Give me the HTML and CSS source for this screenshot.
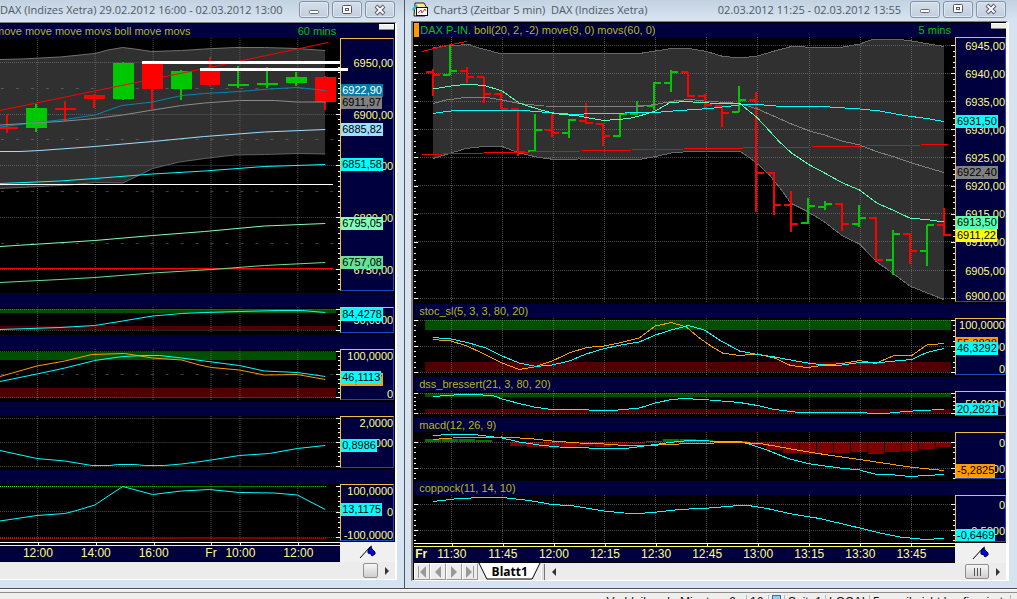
FILE: index.html
```html
<!DOCTYPE html>
<html lang="de">
<head>
<meta charset="utf-8">
<title>DAX Charts</title>
<link rel="stylesheet" href="styles.css">
</head>
<body>
<main class="desk">
  <section class="win win-left">
    <header class="titlebar">
      <h1 class="title">DAX (Indizes Xetra) 29.02.2012 16:00 - 02.03.2012 13:00</h1>
      <div class="controls">
        <button class="ctl" aria-label="Minimieren"><svg width="12" height="12"><rect x="1.5" y="6.5" width="9" height="3" rx="1" fill="#fff" stroke="#667"/></svg></button>
        <button class="ctl" aria-label="Maximieren"><svg width="12" height="12"><rect x="1.5" y="1.5" width="9" height="8" rx="1" fill="#fff" stroke="#556"/><rect x="4.5" y="4.5" width="3" height="2" fill="#fff" stroke="#556"/></svg></button>
        <button class="ctl" aria-label="Schließen"><svg width="12" height="12"><path d="M2 2l8 8M10 2l-8 8" stroke="#556" stroke-width="4"/><path d="M2.500 2.500l7 7M9.500 2.500l-7 7" stroke="#fff" stroke-width="2"/></svg></button>
      </div>
    </header>
    <div class="frame">
      <div class="strip head">
        <span class="ind clipped">move move move movs boll move movs</span>
        <span class="mins">60 mins</span>
        <button class="mini" aria-label="Menü"></button>
      </div>
      <div class="panels" id="left"></div>
      <div class="timerow">
        <div class="times" id="left-times"></div>
        <div class="pin"><svg width="18" height="16"><path d="M1 14L11 3L13 2" fill="none" stroke="#000"/><path d="M9 6l3-3 1 2 3 3 0 2-3 2-1-2-3-1z" fill="#00f" stroke="#002"/></svg></div>
      </div>
      <div class="scroll">
        <span class="track"></span>
        <button class="thumb" aria-label="Bildlauf"></button>
        <button class="arrow" aria-label="Rechts"><svg width="6" height="10"><path d="M1 1v8l4-4z" fill="#333"/></svg></button>
      </div>
    </div>
  </section>
  <section class="win win-right">
    <header class="titlebar">
      <svg class="logo" width="17" height="15"><path d="M3 1h9l3 5-2 8H2z" fill="#ffe98a" stroke="#222"/><path d="M0 7l4-5 2 3-5 4z" fill="#2fb4d8"/><rect x="4.500" y="5.500" width="11" height="8" fill="#fff" stroke="#111"/><path d="M6 11l3-3 1 3 3-4 1 2" fill="none" stroke="#d33"/></svg>
      <h1 class="title">Chart3 (Zeitbar 5 min)&nbsp; DAX (Indizes Xetra)</h1>
      <span class="range">02.03.2012 11:25 - 02.03.2012 13:55</span>
      <div class="controls">
        <button class="ctl" aria-label="Minimieren"><svg width="12" height="12"><rect x="1.5" y="6.5" width="9" height="3" rx="1" fill="#fff" stroke="#667"/></svg></button>
        <button class="ctl" aria-label="Maximieren"><svg width="12" height="12"><rect x="1.5" y="1.5" width="9" height="8" rx="1" fill="#fff" stroke="#556"/><rect x="4.5" y="4.5" width="3" height="2" fill="#fff" stroke="#556"/></svg></button>
        <button class="ctl" aria-label="Schließen"><svg width="12" height="12"><path d="M2 2l8 8M10 2l-8 8" stroke="#556" stroke-width="4"/><path d="M2.500 2.500l7 7M9.500 2.500l-7 7" stroke="#fff" stroke-width="2"/></svg></button>
      </div>
    </header>
    <div class="frame">
      <div class="strip head">
        <span class="marker"></span>
        <span class="sym">DAX P-IN.</span>
        <span class="ind">boll(20, 2, -2)</span>
        <span class="ind">move(9, 0)</span>
        <span class="ind">movs(60, 0)</span>
        <span class="mins">5 mins</span>
        <button class="mini" aria-label="Menü"></button>
      </div>
      <div class="panels" id="right"></div>
      <div class="timerow">
        <div class="times" id="right-times"></div>
        <div class="pin"><svg width="18" height="16"><path d="M1 14L11 3L13 2" fill="none" stroke="#000"/><path d="M9 6l3-3 1 2 3 3 0 2-3 2-1-2-3-1z" fill="#00f" stroke="#002"/></svg></div>
      </div>
      <div class="scroll">
        <button class="nav" aria-label="Erstes Blatt"><svg width="10" height="12"><path d="M1.500 0v12" stroke="#999"/><path d="M9 0v12L3 6z" fill="#999"/></svg></button>
        <button class="nav" aria-label="Voriges Blatt"><svg width="10" height="12"><path d="M8 0v12L2 6z" fill="#999"/></svg></button>
        <button class="nav" aria-label="Nächstes Blatt"><svg width="10" height="12"><path d="M2 0v12l6-6z" fill="#999"/></svg></button>
        <button class="nav" aria-label="Letztes Blatt"><svg width="10" height="12"><path d="M8.500 0v12" stroke="#999"/><path d="M1 0v12l6-6z" fill="#999"/></svg></button>
        <button class="tab"><svg class="tab-bg" viewBox="0 0 64 17" preserveAspectRatio="none"><path d="M1 0L9 16H55L63 0z" fill="#fff"/><path d="M1 0L9 16H55L63 0" fill="none" stroke="#000"/></svg><span class="tab-text">Blatt1</span></button>
        <span class="grip"></span>
        <button class="arrow" aria-label="Links"><svg width="6" height="10"><path d="M5 1v8l-4-4z" fill="#333"/></svg></button>
        <span class="track"></span>
        <button class="thumb wide" aria-label="Bildlauf"><svg width="9" height="8"><path d="M1.500 0v8M4.500 0v8M7.500 0v8" stroke="#555"/></svg></button>
        <button class="arrow" aria-label="Rechts"><svg width="6" height="10"><path d="M1 1v8l4-4z" fill="#333"/></svg></button>
      </div>
    </div>
  </section>
</main>
<footer class="status">
  <span class="cell">Verbleibende Minuten: 2</span>
  <span class="cell">16</span>
  <span class="cell"><i class="screen"></i></span>
  <span class="cell">Seite1</span>
  <span class="cell">LOCAL</span>
  <span class="cell">5 email nicht konfiguriert</span>
</footer>
<script src="charts.js"></script>
</body>
</html>
```
FILE: styles.css
```css
* { box-sizing: border-box; }
body {
  margin: 0;
  height: 100vh;
  overflow: hidden;
  display: flex;
  flex-direction: column;
  background: #f0eded;
  font-family: "Liberation Sans", Arial, sans-serif;
  font-size: 11px;
}
button { padding: 0; margin: 0; border: 0; font: inherit; }
svg { display: block; }
.desk { display: flex; flex: none; border-bottom: 1px solid #fff; }
.win {
  display: flex;
  flex-direction: column;
  min-width: 0;
  background: #d6e3f1;
  border-bottom: 1px solid #4c4c54;
}
.win-left { flex: 406 1 0; border-right: 1px solid #55555c; padding: 0 7px 8px 0; }
.win-right { flex: 611 1 0; padding: 0 8px 7px 6px; }
.titlebar {
  display: flex;
  align-items: center;
  height: 22px;
  padding-bottom: 3px;
  background: linear-gradient(#c3d2e1, #d8e4f1);
  font-family: "Open Sans", sans-serif;
  color: #4d5966;
  white-space: nowrap;
}
.win-left .titlebar { margin-right: -7px; padding-right: 9px; }
.win-right .titlebar { height: 21px; margin: 0 -8px 0 -6px; padding: 0 11px 3px 7px; }
.title { margin: 0; font-size: 11px; font-weight: 400; }
.logo { margin-right: 4px; }
.win-right .range { margin-left: auto; margin-right: 9px; }
.controls { display: flex; gap: 3px; }
.win-left .controls { margin-left: auto; }
.ctl {
  width: 30px;
  height: 17px;
  display: flex;
  align-items: center;
  justify-content: center;
  border: 1px solid #8592a8;
  border-radius: 3px;
  background: linear-gradient(#d5dfeb, #c1cedd);
  box-shadow: inset 0 0 0 1px #dfe8f2;
}
.frame { display: flex; flex-direction: column; background: #000; border-top: 1px solid #808080; border-bottom: 1px solid #fff; }
.win-left .frame { padding: 1px 0 0; border-right: 2px solid #fff; }
.win-right .frame { padding: 1px 0 0 1px; border-left: 2px solid #808080; border-right: 3px solid #fff; }
.strip { height: 14px; background: #00003f; color: #b8b80c; line-height: 14px; white-space: nowrap; padding-left: 5px; }
.win-left .strip { margin-right: 1px; }
.head { display: flex; position: relative; padding-left: 0; gap: 3px; }
.clipped { text-indent: -5px; }
.marker { width: 5px; background: #ff9a00; }
.sym { margin-left: -2px; color: #00c400; }
.mins { margin-left: auto; color: #00c400; }
.win-left .mins { margin-right: 58px; }
.win-right .mins { margin-right: 55px; }
.mini { position: absolute; right: 0; top: 0; width: 15px; height: 6px; background: #eee; border-bottom: 1px solid #888; border-top: 1px solid #fff; }
.panel { display: grid; margin-bottom: 2px; }
.win-left .panel { grid-template-columns: 1fr 54px; margin-right: 1px; }
.win-right .panel { grid-template-columns: 1fr 51px; }
.panel:last-child { margin-bottom: 1px; }
.plot { width: 100%; overflow: visible; position: relative; z-index: 1; pointer-events: none; }
.axis {
  position: relative;
  background: #00003f;
  border: 1px solid #1848c8;
  border-left-color: #f0c040;
  border-top-color: #f0c040;
  overflow: hidden;
}
.val { position: absolute; right: 0; line-height: 13px; color: #ffff80; transform: translateY(-50%); }
.tag { position: absolute; left: 0; height: 13px; line-height: 13px; padding: 0 1px; color: #000; white-space: nowrap; }
.timerow { display: grid; height: 20px; }
.win-left .timerow { grid-template-columns: 1fr 55px; }
.win-right .timerow { grid-template-columns: 1fr 51px; }
.times { position: relative; background: #00003f; border-top: 1px solid #fff; border-bottom: 1px solid #000; font-size: 12px; color: #ffff80; }
.times::before { content: ""; display: block; height: 2px; border-bottom: 1px solid #ffff60; background: #000; }
.times span { position: absolute; top: 3px; line-height: 15px; transform: translateX(-50%); }
.times i { position: absolute; top: 0; width: 1px; height: 2px; background: #ffff80; }
.times .day { font-weight: 700; }
.pin { display: flex; align-items: center; justify-content: center; background: #f0f0f0; }
.scroll { display: flex; align-items: center; height: 17px; background: #ececec; }
.track { flex: 1; }
.thumb { width: 15px; height: 15px; border: 1px solid #909090; border-radius: 2px; background: linear-gradient(#f6f6f6, #cfcfcf); }
.wide { width: 24px; display: flex; align-items: center; justify-content: center; }
.arrow { width: 17px; height: 16px; display: flex; align-items: center; justify-content: center; background: transparent; }
.nav { width: 16px; height: 17px; display: flex; align-items: center; justify-content: center; background: #ececec; border: 1px solid #fff; border-right-color: #999; border-bottom-color: #999; }
.tab { position: relative; width: 63px; height: 17px; background: none; font: 700 12px "Open Sans", sans-serif; }
.tab-bg { position: absolute; inset: 0; width: 100%; height: 100%; }
.tab-text { position: relative; }
.grip { width: 4px; height: 16px; background: #ddd; border-right: 1px solid #777; border-left: 1px solid #fff; }
.status {
  display: grid;
  flex: none;
  grid-template-columns: auto 22px 16px 41px 44px 141px;
  justify-content: end;
  margin-top: 2px;
  padding: 2px 6px 0 0;
  border-top: 1px solid #909090;
  color: #111;
  font-size: 12px;
  line-height: 14px;
  white-space: nowrap;
}
.cell { padding: 0 3px; border-right: 1px solid #b8b8b8; }
.cell:first-child { padding-right: 10px; }
.screen { display: block; width: 9px; height: 12px; background: #8ccff2; border: 1px solid #3a6ea5; }
```
FILE: charts.js
```javascript
const CY = '#00ffff', OR = '#ff9a00', RED = '#ff0000', GR = '#00c800', GY = '#808080';

function line(color, pts, w = 1) {
  return `<polyline points="${pts}" fill="none" stroke="${color}" stroke-width="${w}"/>`;
}
function rect(x, y, x2, y2, color) {
  return `<rect x="${x}" y="${y}" width="${x2 - x}" height="${y2 - y}" fill="${color}"/>`;
}
function hline(y, x1, x2, color, dash) {
  return `<path d="M${x1} ${y}H${x2}" stroke="${color}" stroke-dasharray="${dash}"/>`;
}
function candles(list) {
  return list.map(([x, top, bottom, hi, lo, c]) =>
    rect(x, top, x + 21, bottom, c) + rect(x + 9, hi, x + 11, lo, c)).join('');
}
function ohlc(list) {
  return list.map(([x, hi, lo, open, close, c]) =>
    rect(x - 1, hi, x + 1, lo, c) + rect(x - 7, open - 1, x, open + 1, c) + rect(x, close - 1, x + 7, close + 1, c)).join('');
}
function ticks(x, dir, y0, y1, from, step, every) {
  let out = '', i = 0;
  for (let k = from; k > y0; k -= step * every) from = k;
  for (let y = from; y < y1; y += step, i++) {
    const len = i % every ? 2 : 4;
    out += rect(dir < 0 ? x - len : x, Math.round(y), dir < 0 ? x : x + len, Math.round(y) + 1, '#fff');
  }
  return out;
}

function build(id, cfg, panels) {
  const root = document.getElementById(id);
  panels.forEach(p => {
    if (p.name !== undefined) {
      const s = document.createElement('div');
      s.className = 'strip';
      s.textContent = p.name;
      root.append(s);
    }
    const row = document.createElement('div');
    row.className = 'panel';
    const y1 = p.y + p.h;
    let g = '';
    cfg.cols.forEach(x => { g += `<path d="M${x} ${p.y}V${y1}" stroke="#808080" stroke-opacity=".6" stroke-dasharray="1 1"/>`; });
    (p.dots || []).forEach(y => { g += `<path d="M${cfg.x} ${y}H${cfg.end}" stroke="#808080" stroke-opacity=".6" stroke-dasharray="1 1"/>`; });
    (p.dash || []).forEach(y => { g += `<path d="M${cfg.x + 1} ${y}H${cfg.end}" stroke="#808080" stroke-opacity=".5" stroke-dasharray="3 12"/>`; });
    const [tf, ts, te] = p.tick;
    g += ticks(cfg.x + cfg.w, -1, p.y, y1, tf, ts, te);
    if (cfg.both) g += ticks(cfg.x, 1, p.y, y1, tf, ts, te);
    row.innerHTML = `<svg class="plot" height="${p.h}" viewBox="${cfg.x} ${p.y} ${cfg.w} ${p.h}" preserveAspectRatio="none" shape-rendering="crispEdges">${p.back || ''}${g}${p.draw}</svg>`;
    const vals = p.vals.map(([y, t]) => `<span class="val" style="top:${y - p.y - 1}px">${t}</span>`).join('');
    const tags = p.tags.map(([y, t, bg, fg]) => `<span class="tag" style="top:${y - p.y - 1}px;background:${bg};color:${fg || '#000'}">${t}</span>`).join('');
    row.insertAdjacentHTML('beforeend', `<div class="axis">${vals}${tags}</div>`);
    root.append(row);
  });
}
function times(id, cfg, list) {
  document.getElementById(id).innerHTML = list.map(([x, t, cls]) => {
    const left = (x - cfg.x) / cfg.w * 100;
    return `<span class="${cls || ''}" style="left:${left}%">${t}</span>` + (cls ? '' : `<i style="left:${left}%"></i>`);
  }).join('');
}

const L = { x: 0, w: 341, end: 340, cols: [37.5, 95.5, 153.5, 211.5, 240.5, 298.5] };
const upL = '0,59.5 22,59 60,57 95,53.5 108,50 123,47.5 135,49 152,51.5 182,50.5 205,49 235,47.500 265,47.500 298,48.500 326,50.500';
const loL = '326,154 298,153.500 265,154.500 235,155 205,158.500 180,162 153,168.500 140,175 123,183 95,182.500 70,185 40,186.500 0,188.500';
build('left', L, [
  {
    y: 38, h: 253, dots: [62.5, 114.5, 165.5, 217.5, 269.5], dash: [88.5, 139.5, 191.5, 243.5], tick: [62, 5.17, 10],
    back: `<polygon points="${upL} ${loL}" fill="#303030"/>`,
    draw: line('#707070', upL) + line('#606060', loL) +
      candles([
        [-3, 127, 129, 114, 133, RED], [26, 108, 128, 104, 132, GR], [55, 108, 110, 101, 121, RED], [84, 95, 99, 94, 108, RED],
        [113, 63, 99, 62, 100, GR], [142, 64, 89, 64, 109, RED], [171, 71, 89, 70, 100, GR], [200, 69, 85, 57, 86, RED],
        [229, 84, 86, 66, 88, GR], [258, 83, 85, 67, 88, GR], [287, 77, 83, 72, 86, GR], [316, 77, 102, 76, 110, RED]]) +
      line(RED, '0,110.5 95,91 200,69.500 329,42.500') +
      line('#0088b0', '0,127 40,122 65,119.500 95,115 122,105.500 153,102 182,95.500 205,93.500 240,91.500 270,89 298,87.500 327,90.500') +
      line('#8c8c8c', '0,125 60,121.500 95,118.500 123,115 153,110 182,105.500 205,103 240,100.500 275,100.500 298,102 326,102') +
      line('#9be0ff', '0,151.500 20,151.500 40,150.500 95,146.500 153,141.500 205,136.500 265,132 326,129.500') +
      line(CY, '0,183.500 60,181 95,178.500 153,174 205,171 265,166.500 326,164.500') +
      rect(0, 184, 334, 185, '#fff') + rect(142, 61, 341, 64, '#fff') + rect(200, 68, 349, 71, '#fff') +
      line('#80ffb8', '0,246.500 95,240.500 153,235.500 205,231.500 265,226 326,223.500') +
      rect(0, 268, 334, 269, RED) +
      line('#68e098', '0,282.500 60,279.500 95,277.500 153,273 212,269.500 265,265.500 326,262.500'),
    vals: [[62.5, '6950,00'], [114.5, '6900,00'], [166, '6850,00'], [218, '6800,00'], [270, '6750,00']],
    tags: [[84, '6922,90', '#007ca8', '#fff'], [96, '6911,97', '#808080'], [123, '6885,82', '#9be0ff'], [158, '6851,58', CY], [217, '6795,05', '#80ffb8'], [256, '6757,08', '#68e098']]
  },
  {
    name: '', y: 307, h: 26, dots: [309.5, 330.5], tick: [309, 5.25, 4],
    back: rect(0, 309, 337, 313, '#005000') + rect(0, 326, 337, 330, '#500000'),
    draw: line(CY, '0,329.500 30,328.500 60,327.500 95,325.500 123,321 153,316 182,313.500 205,312.500 240,311.500 280,310.500 303,310.500 326,312.500'),
    vals: [[320, '50,0000']], tags: [[308, '84,4278', CY]]
  },
  {
    name: '', y: 349, h: 51, dots: [351.5, 397.5], dash: [374.5], tick: [351, 4.6, 5],
    back: rect(0, 352, 337, 360, '#005000') + rect(0, 388, 337, 398, '#500000'),
    draw: line(OR, '0,376.500 37,366 65,361 92,354.500 125,353.500 153,358 182,360 200,365 212,367.500 240,370 265,375 298,374.500 326,379.500') +
      line(CY, '0,381.500 37,374 65,368 95,360.500 123,356.500 145,355.500 160,355.500 182,358 205,361 240,365.500 265,371 298,372.500 326,376.500'),
    vals: [[356, '100,0000'], [394, '0']], tags: [[373, '38,3757', OR], [371, '46,1113', CY]]
  },
  {
    name: '', y: 416, h: 52, dots: [418.5, 442.5, 466.5], tick: [418, 4.8, 5],
    draw: line(CY, '0,450.500 37,458.500 65,461 92,465.500 110,465.500 118,464.500 135,464.500 145,465.500 165,465.500 182,464 205,461 240,455.500 270,453.500 298,448.500 326,445.500'),
    vals: [[423, '2,0000'], [443, '1,0000']], tags: [[439, '0,8986', CY]]
  },
  {
    name: '', y: 484, h: 57, dots: [511.5, 537.5], tick: [486, 5.1, 5],
    draw: hline(486.5, 0, 327, '#00ff00', '1 1') + hline(538.5, 0, 327, RED, '1 1') +
      line(CY, '0,521 37,515.500 65,513.500 75,511 95,505 123,486.500 153,494.500 182,491 210,489.500 240,492.500 275,493 298,495 326,509.500'),
    vals: [[491, '100,0000'], [511.5, '0'], [535, '-100,0000']], tags: [[503, '13,1175', CY]]
  }
]);
times('left-times', L, [[38, '12:00'], [96, '14:00'], [154, '16:00'], [211.5, 'Fr'], [241, '10:00'], [299, '12:00']]);

const R = { x: 415, w: 540, end: 954, both: true, cols: Array.from({ length: 10 }, (_, i) => 452.5 + 51 * i) };
const upR = '434,48 447,46 470,44.500 480,48 503,54 520,53.500 540,54 555,53.500 575,54 590,53.500 640,53.500 656,51 672,48.500 690,48.500 707,51.500 722,56 735,57.500 750,57 758,56 775,51 790,47 800,46.500 810,47.500 838,48 860,44 873,39.500 900,39.500 912,41 944,46.500';
const loR = '434,158.500 452,153 467,148.500 480,147 503,146.500 520,153 540,157.500 555,159.500 580,159 592,159.500 640,159.500 656,156.500 672,153 690,151.500 741,151.500 756,162 770,175 782,190 791,203 807,211 825,222 843,236 860,244 877,262 893,273 910,286 944,299.500';
const bars = [[426, 439], [443, 439], [460, 439], [477, 440], [511, 446], [528, 447], [545, 448], [562, 447], [579, 446], [596, 447], [613, 445], [630, 444], [647, 441], [664, 439], [681, 439], [698, 440], [715, 441], [732, 441], [749, 445], [766, 450], [783, 453], [800, 454], [817, 453], [834, 453], [851, 452], [868, 454], [885, 452], [902, 451], [919, 449], [936, 447]];
build('right', R, [
  {
    y: 37, h: 265, dots: [45.5, 73.5, 101.5, 129.5, 157.5, 185.5, 213.5, 241.5, 270.5, 298.5], tick: [45, 5.62, 5],
    back: `<polygon points="${upR} ${loR.split(' ').reverse().join(' ')}" fill="#303030"/>`,
    draw: line('#686868', upR) + line('#686868', loR) +
      ohlc([
        [434, 69, 96, 72, 75, RED], [451, 44, 75, 75, 71, GR], [468, 67, 83, 71, 77, RED], [485, 77, 103, 77, 94, RED], [502, 91, 109, 94, 109, RED],
        [519, 108, 156, 109, 152, RED], [536, 114, 152, 151, 130, GR], [553, 113, 137, 130, 133, RED], [570, 119, 138, 133, 120, GR], [587, 103, 124, 121, 123, RED],
        [604, 123, 146, 124, 136, RED], [621, 114, 137, 136, 114, GR], [638, 101, 115, 114, 106, GR], [655, 82, 110, 106, 83, GR], [672, 70, 92, 83, 72, GR],
        [689, 72, 97, 72, 96, RED], [706, 94, 109, 96, 105, RED], [723, 106, 127, 106, 113, RED], [740, 86, 112, 112, 100, GR], [757, 92, 212, 100, 173, RED],
        [774, 172, 215, 173, 205, RED], [791, 191, 232, 205, 224, RED], [808, 198, 224, 223, 206, GR], [825, 201, 210, 207, 204, GR], [842, 203, 231, 204, 224, RED],
        [859, 205, 227, 224, 218, GR], [876, 217, 261, 218, 260, RED], [893, 230, 275, 260, 234, GR], [910, 233, 264, 234, 251, RED], [927, 225, 266, 251, 225, GR], [944, 208, 236, 225, 235, RED]]) +
      line(RED, '423,51.500 452,44.500 468,41.500') + line(RED, '423,154.500 505,152.500 607,150.500 710,148.500 812,147 948,144.500') +
      line('#808080', '434,103.500 447,100 470,97 485,97 503,100 520,103.500 545,106 590,106.500 640,106.500 656,104.500 675,101 690,99.500 705,101 740,103.500 758,109 775,116.500 792,124 810,131 825,135 842,141 860,145 878,152 895,157 912,163 944,172.500') +
      line(CY, '434,113.500 455,110.500 525,110.500 555,113 575,114.500 595,113.500 656,112.500 680,110.500 710,108.500 740,105 758,104.500 782,106.500 830,107 860,109 880,111 905,115.500 930,119 944,121.500') +
      line('#58ffb0', '434,89 452,86 470,84 487,86 503,91 520,103 540,109.500 555,113.500 580,116 590,118 605,120.500 630,118.500 640,116 656,111 670,103 685,101.500 710,103 741,104 757,117 770,131 780,142 792,153 810,165 825,173 843,183 860,190 877,203 893,210 910,218 930,220 944,222'),
    vals: [[45.5, '6945,00'], [73.5, '6940,00'], [101.5, '6935,00'], [129.5, '6930,00'], [157.5, '6925,00'], [185.5, '6920,00'], [213.5, '6915,00'], [241.5, '6910,00'], [270.5, '6905,00'], [296, '6900,00']],
    tags: [[115, '6931,50', CY], [166, '6922,40', '#808080'], [216, '6913,50', '#58ffb0'], [229, '6911,22', '#ffff00']]
  },
  {
    name: 'stoc_sl(5, 3, 3, 80, 20)', y: 318, h: 57, dots: [320.5, 346.5, 372.5], tick: [320, 5.2, 5],
    back: rect(426, 320, 951, 330, '#005000') + rect(426, 362, 951, 372, '#500000'),
    draw: line(OR, '434,339.500 452,341 468,346 485,354 503,363 520,369.500 535,367 553,361 570,353 587,347.500 605,346 622,342.500 640,338 656,326 672,322.500 687,327 700,338 713,347 723,353 740,355.500 758,354 775,358 791,365.500 808,367.500 825,365 842,363.500 860,360.500 876,363.500 893,356 912,355.500 927,345 944,343.500') +
      line(CY, '434,337.500 452,339 470,343 487,348 503,356 520,363 537,366.500 553,365 570,361 587,354 605,348.500 622,345 640,342 656,335 672,330 689,325.500 705,330 720,340 740,351 758,354.500 775,357 791,360 808,363 825,365 842,365 860,362.500 880,362.500 895,361 912,359.500 927,352.500 944,348.500'),
    vals: [[325, '100,0000'], [346.5, '50,0000'], [368.5, '0']], tags: [[337, '55,3838', OR], [342, '46,3292', CY]]
  },
  {
    name: 'dss_bressert(21, 3, 80, 20)', y: 391, h: 25, dots: [393.5, 413.5], tick: [393, 4, 5],
    back: rect(426, 393, 951, 397, '#005000') + rect(426, 409, 951, 413, '#500000'),
    draw: line(CY, '434,396.500 455,395 478,394.500 495,396 503,399 520,403.500 535,407 552,409.500 590,410 605,411 625,409.500 640,408 656,403 672,399.500 685,398.500 710,400 740,402.500 758,405.500 775,409.500 800,412.500 850,412.500 885,413.500 900,412 920,410.500 944,409.500'),
    vals: [[403.5, '50,0000']], tags: [[403, '20,2821', CY]]
  },
  {
    name: 'macd(12, 26, 9)', y: 432, h: 47, dots: [442.5, 468.5], tick: [442, 5.2, 5],
    back: bars.map(([x, y]) => y < 442 ? rect(x, y, x + 16, 442, '#007800') : rect(x, 442, Math.min(x + 16, 951), y, '#800000')).join(''),
    draw: line(CY, '434,435.500 450,434.500 475,434.500 503,438 520,442 540,445 560,447 605,448.500 630,448 645,446 670,442.500 690,440.500 710,441 740,441.500 750,444 770,451 790,459 808,463.500 840,468 860,470 875,474 890,474.500 910,476.500 944,474.500') +
      line(OR, '434,439.500 460,437.500 503,437 530,438.500 553,441 580,443 605,444 625,445.500 660,445 690,443.500 740,442.500 760,443.500 775,446 800,450.500 825,454.500 860,459.500 910,467 944,470.500'),
    vals: [[442.5, '0'], [468.5, '-5,0000']], tags: [[466, '-6,0312', CY], [464, '-5,2825', OR]]
  },
  {
    name: 'coppock(11, 14, 10)', y: 495, h: 47, dots: [504.5, 530.5], tick: [504, 5.2, 5],
    draw: line(CY, '434,501.500 455,499 480,497.500 503,497.500 530,500.500 553,504.500 575,506 605,511 625,513 640,513.500 658,512 680,509.500 710,508 740,505.500 752,506 770,509 792,514 820,518.500 860,528 880,533 900,537 925,539.500 944,538.500'),
    vals: [[504.5, '0'], [530.5, '-0,5000']], tags: [[529, '-0,6469', CY]]
  }
]);
times('right-times', R, [[422, 'Fr', 'day'], ...['11:30', '11:45', '12:00', '12:15', '12:30', '12:45', '13:00', '13:15', '13:30', '13:45'].map((t, i) => [452.5 + 51 * i, t])]);
```
